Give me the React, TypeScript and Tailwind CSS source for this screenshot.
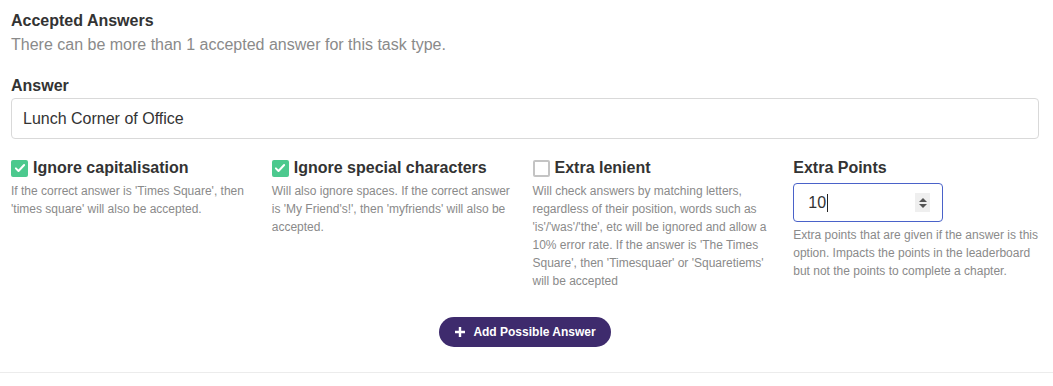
const options = [
  {
    label: "Ignore capitalisation",
    checked: true,
    text: "If the correct answer is 'Times Square', then 'times square' will also be accepted.",
  },
  {
    label: "Ignore special characters",
    checked: true,
    text: "Will also ignore spaces. If the correct answer is 'My Friend's!', then 'myfriends' will also be accepted.",
  },
  {
    label: "Extra lenient",
    checked: false,
    text: "Will check answers by matching letters, regardless of their position, words such as 'is'/'was'/'the', etc will be ignored and allow a 10% error rate. If the answer is 'The Times Square', then 'Timesquaer' or 'Squaretiems' will be accepted",
  },
];

const Checkbox = ({ checked }: { checked: boolean }) =>
  checked ? (
    <span className="flex h-[17px] w-[17px] shrink-0 items-center justify-center rounded-[2px] bg-[#4cc98e]">
      <svg viewBox="0 0 16 16" className="h-[12px] w-[12px]" fill="none">
        <path d="M2.5 8.5l3.5 3.5 7.5-8" stroke="white" strokeWidth="2.6" strokeLinecap="round" strokeLinejoin="round" />
      </svg>
    </span>
  ) : (
    <span className="h-[17px] w-[17px] shrink-0 rounded-[2px] border-2 border-[#c4c4c4] bg-white"></span>
  );

export default function App() {
  return (
    <div className="min-h-[386px] bg-white font-['Liberation_Sans',Arial,sans-serif] text-[#333]">
      <div className="px-[11px] pt-[10px]">
        <h2 className="text-[16px] font-bold leading-[22px]">Accepted Answers</h2>
        <p className="mt-[2px] text-[16px] leading-[22px] text-[#8a8a8a]">
          There can be more than 1 accepted answer for this task type.
        </p>

        <label className="mt-[19px] block text-[16px] font-bold leading-[22px]">Answer</label>
        <div className="mt-[1px] flex h-[41px] w-[1028px] items-center rounded-[4px] border border-[#d9d9d9] px-[11px] text-[16px]">
          Lunch Corner of Office
        </div>

        <div className="mt-[18px] grid w-[1032px] grid-cols-4 gap-x-[11px]">
          {options.map((o) => (
            <div key={o.label}>
              <div className="flex items-center gap-[5px]">
                <Checkbox checked={o.checked} />
                <span className="text-[16px] font-bold leading-[22px]">{o.label}</span>
              </div>
              <p className="mt-[3px] pr-[6px] text-[12px] leading-[18px] text-[#8a8a8a]">{o.text}</p>
            </div>
          ))}
          <div>
            <div className="text-[16px] font-bold leading-[22px]">Extra Points</div>
            <div className="mt-[4px] flex h-[39px] w-[150px] items-center justify-between rounded-[4px] border border-[#4a62c9] pl-[14px] pr-[12px] text-[16px]">
              <span className="flex items-center">
                10<span className="ml-[1px] h-[18px] w-px bg-[#222]"></span>
              </span>
              <span className="flex h-[19px] w-[15px] flex-col items-center justify-center gap-[2px] bg-[#efefef]">
                <svg viewBox="0 0 8 4" className="h-[4px] w-[8px]"><path d="M0 4L4 0L8 4Z" fill="#555" /></svg>
                <svg viewBox="0 0 8 4" className="h-[4px] w-[8px]"><path d="M0 0L4 4L8 0Z" fill="#555" /></svg>
              </span>
            </div>
            <p className="mt-[4px] text-[12px] leading-[18px] text-[#8a8a8a]">
              Extra points that are given if the answer is this option. Impacts the points in the leaderboard but not the points to complete a chapter.
            </p>
          </div>
        </div>

        <div className="mt-[27px] flex justify-center pr-[3px]">
          <button className="flex h-[30px] items-center gap-[7px] rounded-full bg-[#3e2b6d] px-[15px] text-[12px] font-bold text-white">
            <svg viewBox="0 0 12 12" className="h-[12px] w-[12px]">
              <path d="M6 1v10M1 6h10" stroke="white" strokeWidth="2.4" />
            </svg>
            Add Possible Answer
          </button>
        </div>
      </div>
      <div className="mt-[25px] border-t border-[#ececec]"></div>
    </div>
  );
}
